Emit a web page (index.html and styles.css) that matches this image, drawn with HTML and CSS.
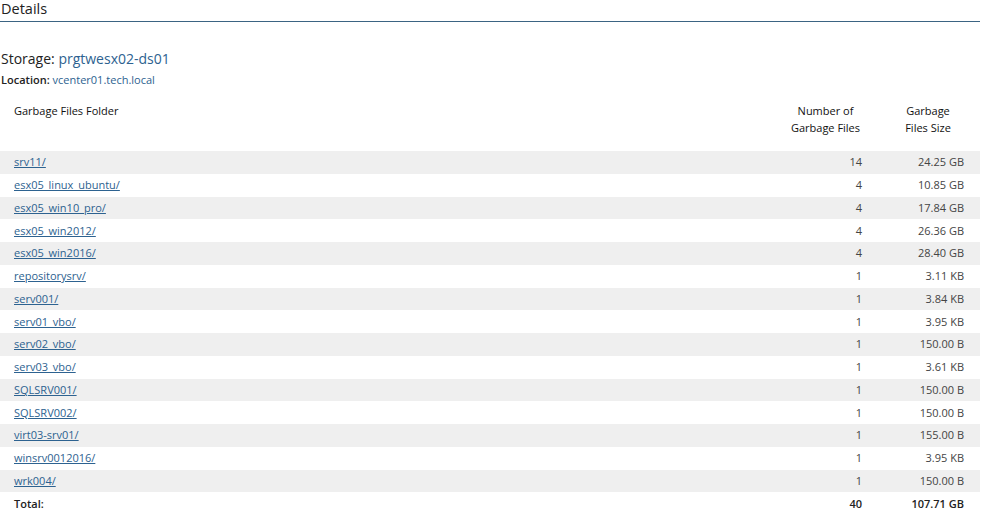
FILE: index.html
```html
<!DOCTYPE html>
<html>
<head>
<meta charset="utf-8">
<link rel="stylesheet" href="styles.css">
</head>
<body>
<div class="page">
  <div class="section-title">Details</div>
  <div class="storage">Storage: <span class="accent">prgtwesx02-ds01</span></div>
  <div class="location"><span class="label">Location:</span> <span class="accent">vcenter01.tech.local</span></div>
  <table class="grid">
    <thead>
      <tr>
        <th class="c-folder">Garbage Files Folder</th>
        <th class="c-count">Number of<br>Garbage Files</th>
        <th class="c-size">Garbage<br>Files Size</th>
      </tr>
    </thead>
    <tbody>
      <tr><td class="c-folder"><a href="#">srv11/</a></td><td class="c-count">14</td><td class="c-size">24.25 GB</td></tr>
      <tr><td class="c-folder"><a href="#">esx05_linux_ubuntu/</a></td><td class="c-count">4</td><td class="c-size">10.85 GB</td></tr>
      <tr><td class="c-folder"><a href="#">esx05_win10_pro/</a></td><td class="c-count">4</td><td class="c-size">17.84 GB</td></tr>
      <tr><td class="c-folder"><a href="#">esx05_win2012/</a></td><td class="c-count">4</td><td class="c-size">26.36 GB</td></tr>
      <tr><td class="c-folder"><a href="#">esx05_win2016/</a></td><td class="c-count">4</td><td class="c-size">28.40 GB</td></tr>
      <tr><td class="c-folder"><a href="#">repositorysrv/</a></td><td class="c-count">1</td><td class="c-size">3.11 KB</td></tr>
      <tr><td class="c-folder"><a href="#">serv001/</a></td><td class="c-count">1</td><td class="c-size">3.84 KB</td></tr>
      <tr><td class="c-folder"><a href="#">serv01_vbo/</a></td><td class="c-count">1</td><td class="c-size">3.95 KB</td></tr>
      <tr><td class="c-folder"><a href="#">serv02_vbo/</a></td><td class="c-count">1</td><td class="c-size">150.00 B</td></tr>
      <tr><td class="c-folder"><a href="#">serv03_vbo/</a></td><td class="c-count">1</td><td class="c-size">3.61 KB</td></tr>
      <tr><td class="c-folder"><a href="#">SQLSRV001/</a></td><td class="c-count">1</td><td class="c-size">150.00 B</td></tr>
      <tr><td class="c-folder"><a href="#">SQLSRV002/</a></td><td class="c-count">1</td><td class="c-size">150.00 B</td></tr>
      <tr><td class="c-folder"><a href="#">virt03-srv01/</a></td><td class="c-count">1</td><td class="c-size">155.00 B</td></tr>
      <tr><td class="c-folder"><a href="#">winsrv0012016/</a></td><td class="c-count">1</td><td class="c-size">3.95 KB</td></tr>
      <tr><td class="c-folder"><a href="#">wrk004/</a></td><td class="c-count">1</td><td class="c-size">150.00 B</td></tr>
      <tr class="total"><td class="c-folder">Total:</td><td class="c-count">40</td><td class="c-size">107.71 GB</td></tr>
    </tbody>
  </table>
</div>
</body>
</html>
```

FILE: styles.css
```css
html, body {
  margin: 0;
  padding: 0;
  background: #ffffff;
}
body {
  font-family: "Open Sans", "Noto Sans", sans-serif;
  color: #333333;
  font-size: 11px;
}
.page {
  width: 980px;
}
.section-title {
  font-size: 14.5px;
  color: #222222;
  line-height: 17px;
  padding: 0 0 4px 1px;
  border-bottom: 1px solid #3b6483;
}
.storage {
  margin-top: 27px;
  padding-left: 1px;
  font-size: 14px;
  line-height: 20px;
  color: #222222;
}
.accent {
  color: #2d6290;
}
.location {
  margin-top: 3px;
  padding-left: 1px;
  font-size: 11px;
  line-height: 16px;
}
.location .label {
  font-weight: 600;
  color: #222222;
}
.grid {
  width: 980px;
  border-collapse: collapse;
  table-layout: fixed;
}
.grid th {
  font-weight: 400;
  color: #111111;
  line-height: 17px;
  vertical-align: top;
  padding: 14px 0 0 0;
  height: 63px;
  box-sizing: border-box;
}
.grid td {
  height: 22.75px;
  padding: 0;
  line-height: 16px;
  color: #444444;
}
.grid .c-folder {
  text-align: left;
  padding-left: 14px;
}
.grid th.c-count {
  width: 150px;
  text-align: center;
  padding-left: 77px;
}
.grid th.c-size {
  width: 118px;
  text-align: center;
  padding-left: 14px;
}
.grid td.c-count {
  text-align: right;
}
.grid td.c-size {
  text-align: right;
  padding-right: 16px;
}
.grid tbody tr:nth-child(odd) {
  background: #efefef;
}
.grid a {
  color: #2d6290;
  text-decoration: underline;
}
.grid tr.total td {
  font-weight: 600;
  color: #222222;
  background: #ffffff;
}
```
